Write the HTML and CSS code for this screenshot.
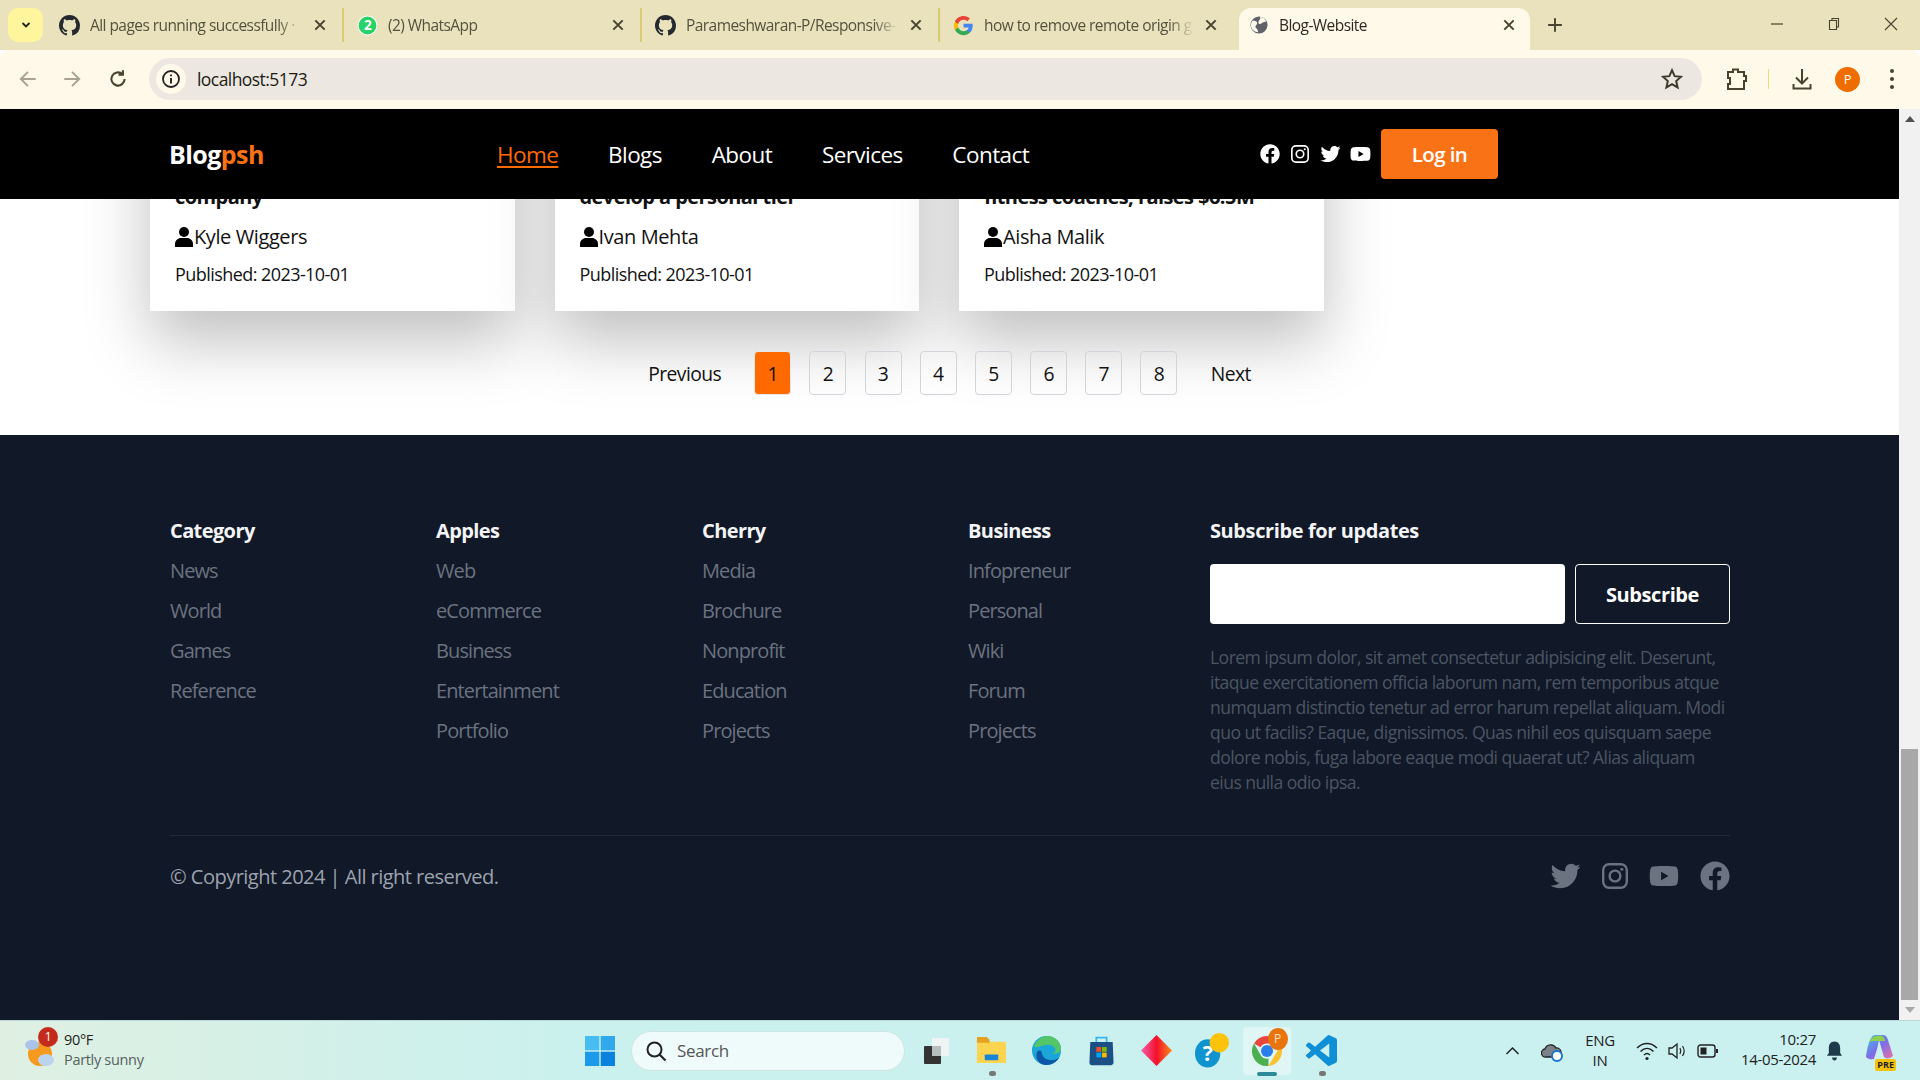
FILE: index.html
```html
<!DOCTYPE html>
<html lang="en">
<head>
<meta charset="utf-8">
<title>Blog-Website</title>
<link rel="stylesheet" href="styles.css">
</head>
<body>
<svg class="defs" aria-hidden="true">
  <defs>
    <symbol id="gh" viewBox="0 0 16 16"><path d="M8 0C3.58 0 0 3.58 0 8c0 3.54 2.29 6.53 5.47 7.59.4.07.55-.17.55-.38 0-.19-.01-.82-.01-1.49-2.01.37-2.53-.49-2.69-.94-.09-.23-.48-.94-.82-1.13-.28-.15-.68-.52-.01-.53.63-.01 1.08.58 1.23.82.72 1.21 1.87.87 2.33.66.07-.52.28-.87.51-1.07-1.78-.2-3.64-.89-3.64-3.95 0-.87.31-1.59.82-2.15-.08-.2-.36-1.02.08-2.12 0 0 .67-.21 2.2.82.64-.18 1.32-.27 2-.27.68 0 1.36.09 2 .27 1.53-1.04 2.2-.82 2.2-.82.44 1.1.16 1.92.08 2.12.51.56.82 1.27.82 2.15 0 3.07-1.87 3.75-3.65 3.95.29.25.54.73.54 1.48 0 1.07-.01 1.93-.01 2.2 0 .21.15.46.55.38A8.013 8.013 0 0016 8c0-4.42-3.58-8-8-8z"/></symbol>
    <symbol id="x" viewBox="0 0 12 12"><path d="M2 2l8 8M10 2l-8 8" fill="none" stroke="currentColor" stroke-width="1.7"/></symbol>
    <symbol id="fb" viewBox="0 0 512 512"><path d="M504 256C504 119 393 8 256 8S8 119 8 256c0 123.78 90.69 226.38 209.25 245V327.69h-63V256h63v-54.64c0-62.15 37-96.48 93.67-96.48 27.14 0 55.52 4.84 55.52 4.84v61h-31.28c-30.8 0-40.41 19.12-40.41 38.73V256h68.78l-11 71.69h-57.78V501C413.31 482.38 504 379.78 504 256z"/></symbol>
    <symbol id="tw" viewBox="0 0 512 512"><path d="M459.37 151.716c.325 4.548.325 9.097.325 13.645 0 138.72-105.583 298.558-298.558 298.558-59.452 0-114.68-17.219-161.137-47.106 8.447.974 16.568 1.299 25.34 1.299 49.055 0 94.213-16.568 130.274-44.832-46.132-.975-84.792-31.188-98.112-72.772 6.498.974 12.995 1.624 19.818 1.624 9.421 0 18.843-1.3 27.614-3.573-48.081-9.747-84.143-51.98-84.143-102.985v-1.299c13.969 7.797 30.214 12.67 47.431 13.319-28.264-18.843-46.781-51.005-46.781-87.391 0-19.492 5.197-37.36 14.294-52.954 51.655 63.675 129.3 105.258 216.365 109.807-1.624-7.797-2.599-15.918-2.599-24.04 0-57.828 46.782-104.934 104.934-104.934 30.213 0 57.502 12.67 76.67 33.137 23.715-4.548 46.456-13.32 66.599-25.34-7.798 24.366-24.366 44.833-46.132 57.827 21.117-2.273 41.584-8.122 60.426-16.243-14.292 20.791-32.161 39.308-52.628 54.253z"/></symbol>
    <symbol id="yt" viewBox="0 0 576 512"><path d="M549.655 124.083c-6.281-23.65-24.787-42.276-48.284-48.597C458.781 64 288 64 288 64S117.22 64 74.629 75.486c-23.497 6.322-42.003 24.947-48.284 48.597-11.412 42.867-11.412 132.305-11.412 132.305s0 89.438 11.412 132.305c6.281 23.65 24.787 41.5 48.284 47.821C117.22 448 288 448 288 448s170.78 0 213.371-11.486c23.497-6.321 42.003-24.171 48.284-47.821 11.412-42.867 11.412-132.305 11.412-132.305s0-89.438-11.412-132.305zm-317.51 213.508V175.185l142.739 81.205-142.739 81.201z"/></symbol>
    <symbol id="ig" viewBox="0 0 24 24"><rect x="1.1" y="1.1" width="21.8" height="21.8" rx="5.5" fill="none" stroke="currentColor" stroke-width="2.2"/><circle cx="12" cy="12" r="5" fill="none" stroke="currentColor" stroke-width="2.2"/><circle cx="18.3" cy="5.7" r="1.4" fill="currentColor"/></symbol>
    <symbol id="user" viewBox="0 0 18 20"><circle cx="9" cy="5" r="5"/><path d="M0 20v-3c0-3.500 3-6 6-6h6c3 0 6 2.500 6 6v3z"/></symbol>
  </defs>
</svg>

<div class="tabstrip">
  <div class="tabs-btn"><svg class="i12" viewBox="0 0 12 12"><path d="M2.500 4l3.500 3.500L9.500 4" fill="none" stroke="#222" stroke-width="1.800"/></svg></div>
  <div class="tab">
    <svg class="fav"><use href="#gh"/></svg>
    <span class="tab-title">All pages running successfully ·</span>
    <svg class="tab-x"><use href="#x"/></svg>
  </div>
  <div class="tab">
    <svg class="fav" viewBox="0 0 20 20"><circle cx="10" cy="10" r="9" fill="#25d366" stroke="#fff"/><text x="10" y="14.500" text-anchor="middle" class="wa-num">2</text></svg>
    <span class="tab-title">(2) WhatsApp</span>
    <svg class="tab-x"><use href="#x"/></svg>
  </div>
  <div class="tab">
    <svg class="fav"><use href="#gh"/></svg>
    <span class="tab-title">Parameshwaran-P/Responsive-</span>
    <svg class="tab-x"><use href="#x"/></svg>
  </div>
  <div class="tab tab-last">
    <svg class="fav" viewBox="0 0 48 48"><path fill="#4285f4" d="M45 24.500c0-1.600-.1-3.100-.4-4.500H24v8.500h11.800c-.5 2.700-2 5-4.300 6.600v5.500h7C42.600 36.800 45 31.200 45 24.500z"/><path fill="#34a853" d="M24 46c5.900 0 10.900-2 14.500-5.400l-7-5.500c-2 1.300-4.500 2.100-7.500 2.100-5.700 0-10.600-3.900-12.300-9H4.400v5.600C8 40.900 15.400 46 24 46z"/><path fill="#fbbc05" d="M11.700 28.700c-.9-2.700-.9-5.700 0-8.400v-5.700H4.400c-3 6-3 13.800 0 19.800z"/><path fill="#ea4335" d="M24 10.900c3.200 0 6.100 1.100 8.400 3.300l6.300-6.300C34.900 4.300 29.900 2 24 2 15.400 2 8 7.100 4.400 14.600l7.300 5.700c1.700-5.500 6.600-9.400 12.300-9.400z"/></svg>
    <span class="tab-title">how to remove remote origin g</span>
    <svg class="tab-x"><use href="#x"/></svg>
  </div>
  <div class="tab-active">
    <svg class="fav fav-active" viewBox="0 0 20 20"><circle cx="10" cy="10" r="9.500" fill="#5f6368"/><path d="M3 5c3 0 5 1 5 3s-2 2-2 4 3 2 3 6c-4 0-8-3-8-8 0-2 1-4 2-5zM11 1c3 0 6 2 7 5l-3 1c-2 0-2 2-4 2s-2-2-1-4 2-1 1-4z" fill="#fff9ea"/></svg>
    <span class="tab-title tab-title-active">Blog-Website</span>
    <svg class="tab-x"><use href="#x"/></svg>
  </div>
  <svg class="newtab" viewBox="0 0 14 14"><path d="M7 1v12M1 7h12" fill="none" stroke="#47432f" stroke-width="1.700"/></svg>
  <div class="winctl">
    <svg class="i14" viewBox="0 0 14 14"><path d="M1 7h12" stroke="#47432f" stroke-width="1.200"/></svg>
    <svg class="i14" viewBox="0 0 14 14"><path d="M2.500 3.500h7v9h-7zM5 3.500V1.500h6.500v8.500h-2" fill="none" stroke="#47432f" stroke-width="1.100"/></svg>
    <svg class="i14" viewBox="0 0 14 14"><path d="M1 1l12 12M13 1L1 13" stroke="#47432f" stroke-width="1.100"/></svg>
  </div>
</div>

<div class="toolbar">
  <svg class="tool-ic dim" viewBox="0 0 20 20"><path d="M17 10H4M10 3.500L3.500 10l6.500 6.500" fill="none" stroke="currentColor" stroke-width="1.800"/></svg>
  <svg class="tool-ic dim" viewBox="0 0 20 20"><path d="M3 10h13M10 3.500l6.500 6.500-6.500 6.500" fill="none" stroke="currentColor" stroke-width="1.800"/></svg>
  <svg class="tool-ic tool-reload" viewBox="0 0 20 20"><path d="M16 10a6 6 0 1 1-2-4.500M14.500 2v4h-4" fill="none" stroke="currentColor" stroke-width="1.900"/></svg>
  <div class="omnibox">
    <div class="info"><svg class="i20" viewBox="0 0 20 20"><circle cx="10" cy="10" r="8" fill="none" stroke="#222" stroke-width="1.800"/><path d="M10 9v5.500M10 5.500v1.800" stroke="#222" stroke-width="1.900"/></svg></div>
    <span class="url">localhost:5173</span>
    <svg class="star" viewBox="0 0 20 20"><path d="M10 2l2.400 5.400 5.800.6-4.400 3.900 1.300 5.800-5.100-3-5.100 3 1.300-5.800L1.800 8l5.800-.6z" fill="none" stroke="#3d3a2b" stroke-width="1.800"/></svg>
  </div>
  <svg class="ext" viewBox="0 0 22 24"><path d="M3 5h5V2.500h5V5h6v4h2v5h-2v8H3v-5h2v-6H3z" fill="none" stroke="#47432f" stroke-width="2"/></svg>
  <div class="tool-sep"></div>
  <svg class="dl" viewBox="0 0 22 24"><path d="M11 2v14M5 10.500l6 6 6-6M2.500 17v4.500h17V17" fill="none" stroke="#47432f" stroke-width="2"/></svg>
  <div class="avatar">P</div>
  <svg class="dots" viewBox="0 0 6 22"><circle cx="3" cy="3" r="2" fill="#47432f"/><circle cx="3" cy="11" r="2" fill="#47432f"/><circle cx="3" cy="19" r="2" fill="#47432f"/></svg>
</div>

<div class="viewport">
  <div class="page">
    <header class="site-header">
      <a class="logo">Blog<span class="logo-accent">psh</span></a>
      <nav class="site-nav">
        <a class="nav-current">Home</a>
        <a>Blogs</a>
        <a>About</a>
        <a>Services</a>
        <a>Contact</a>
      </nav>
      <div class="head-right">
        <svg class="soc soc-fb"><use href="#fb"/></svg>
        <svg class="soc soc-ig"><use href="#ig"/></svg>
        <svg class="soc soc-tw"><use href="#tw"/></svg>
        <svg class="soc soc-yt"><use href="#yt"/></svg>
        <button class="login">Log in</button>
      </div>
    </header>

    <main class="blog-main">
      <div class="cards">
        <article class="card">
          <h3 class="card-title">company</h3>
          <div class="author"><svg class="user"><use href="#user"/></svg>Kyle Wiggers</div>
          <p class="pub">Published: 2023-10-01</p>
        </article>
        <article class="card">
          <h3 class="card-title">develop a personal tier</h3>
          <div class="author"><svg class="user"><use href="#user"/></svg>Ivan Mehta</div>
          <p class="pub">Published: 2023-10-01</p>
        </article>
        <article class="card">
          <h3 class="card-title">fitness coaches, raises $6.5M</h3>
          <div class="author"><svg class="user"><use href="#user"/></svg>Aisha Malik</div>
          <p class="pub">Published: 2023-10-01</p>
        </article>
      </div>
      <div class="pager">
        <a class="pager-text pager-prev">Previous</a>
        <a class="pg pg-on">1</a>
        <a class="pg">2</a>
        <a class="pg">3</a>
        <a class="pg">4</a>
        <a class="pg">5</a>
        <a class="pg">6</a>
        <a class="pg">7</a>
        <a class="pg">8</a>
        <a class="pager-text pager-next">Next</a>
      </div>
    </main>

    <footer class="site-footer">
      <div class="foot-grid">
        <div class="foot-col">
          <h4>Category</h4>
          <a>News</a><a>World</a><a>Games</a><a>Reference</a>
        </div>
        <div class="foot-col">
          <h4>Apples</h4>
          <a>Web</a><a>eCommerce</a><a>Business</a><a>Entertainment</a><a>Portfolio</a>
        </div>
        <div class="foot-col">
          <h4>Cherry</h4>
          <a>Media</a><a>Brochure</a><a>Nonprofit</a><a>Education</a><a>Projects</a>
        </div>
        <div class="foot-col">
          <h4>Business</h4>
          <a>Infopreneur</a><a>Personal</a><a>Wiki</a><a>Forum</a><a>Projects</a>
        </div>
        <div class="foot-sub">
          <h4>Subscribe for updates</h4>
          <form class="sub-form">
            <input class="sub-input" type="text" aria-label="Email">
            <button class="sub-btn" type="button">Subscribe</button>
          </form>
          <p class="sub-text">Lorem ipsum dolor, sit amet consectetur adipisicing elit. Deserunt,<br>itaque exercitationem officia laborum nam, rem temporibus atque<br>numquam distinctio tenetur ad error harum repellat aliquam. Modi<br>quo ut facilis? Eaque, dignissimos. Quas nihil eos quisquam saepe<br>dolore nobis, fuga labore eaque modi quaerat ut? Alias aliquam<br>eius nulla odio ipsa.</p>
        </div>
      </div>
      <div class="foot-bottom">
        <span class="copy">© Copyright 2024 | All right reserved.</span>
        <div class="foot-soc">
          <svg class="fs fs-tw"><use href="#tw"/></svg>
          <svg class="fs fs-ig"><use href="#ig"/></svg>
          <svg class="fs fs-yt"><use href="#yt"/></svg>
          <svg class="fs fs-fb"><use href="#fb"/></svg>
        </div>
      </div>
    </footer>
  </div>
  <div class="scrollbar">
    <div class="sb-arrow"><div class="tri-up"></div></div>
    <div class="sb-track"></div>
    <div class="sb-thumb"></div>
    <div class="sb-arrow"><div class="tri-down"></div></div>
  </div>
</div>

<div class="taskbar">
  <div class="weather">
    <div class="wx-icon">
      <svg class="wx-svg" viewBox="0 0 32 36"><circle cx="15" cy="20" r="12" fill="#f59a1f"/><ellipse cx="7" cy="11" rx="7" ry="5" fill="#a9c4e8"/><ellipse cx="21" cy="26" rx="8" ry="6" fill="#bcd3f0"/></svg>
      <span class="wx-badge">1</span>
    </div>
    <div class="wx-text"><span class="wx-temp">90°F</span><span class="wx-desc">Partly sunny</span></div>
  </div>
  <div class="app">
    <svg class="ic-win" viewBox="0 0 30 30"><rect x="0" y="0" width="14.300" height="14.300" fill="#47bdf2"/><rect x="15.700" y="0" width="14.300" height="14.300" fill="#2fa8ec"/><rect x="0" y="15.700" width="14.300" height="14.300" fill="#1a9ae8"/><rect x="15.700" y="15.700" width="14.300" height="14.300" fill="#0a82de"/></svg>
  </div>
  <div class="search">
    <svg class="i22" viewBox="0 0 22 22"><circle cx="9.500" cy="9.500" r="7" fill="none" stroke="#222" stroke-width="2"/><path d="M14.500 14.500l6 6" stroke="#222" stroke-width="2.200"/></svg>
    <span class="search-label">Search</span>
  </div>
  <div class="app">
    <svg class="ic-task" viewBox="0 0 26 26"><rect x="0" y="8" width="17" height="18" rx="1" fill="#333"/><rect x="8" y="0" width="17" height="18" rx="1" fill="#eef4f4"/><rect x="8" y="8" width="9" height="10" fill="#b8bdbd"/></svg>
  </div>
  <div class="app">
    <svg class="ic-app" viewBox="0 0 32 30"><path d="M1 3h10l3 3h17v22H1z" fill="#fcd44f"/><path d="M1 1h10l3 3v3H1z" fill="#e3a21f"/><rect x="9" y="19" width="14" height="6" rx="1" fill="#1a85d6"/></svg>
    <span class="app-dot"></span>
  </div>
  <div class="app">
    <svg class="ic-app" viewBox="0 0 32 32"><circle cx="16" cy="16" r="15" fill="#1aa6d8"/><path d="M3 12C6 4 12 1 17 1c8 0 14 6 14 13 0 4-4 6-9 5 3-1 4-3 3-5-2-4-8-5-13-3-4 1-7 2-9 1z" fill="#53c66a"/><path d="M11 17c0 6 5 9 11 9 2 0 5-1 7-3-2 5-8 8-13 8-7 0-12-6-10-13 1-2 3-3 5-1z" fill="#0c58a8"/></svg>
  </div>
  <div class="app">
    <svg class="ic-app" viewBox="0 0 30 36"><path d="M9 8V3h12v5" fill="none" stroke="#38b6ea" stroke-width="2"/><path d="M2 8h26l1 24c0 2-2 3-3 3H4c-2 0-3-1-3-3z" fill="#1b4f86"/><rect x="9" y="14" width="5.500" height="5.500" fill="#f25022"/><rect x="15.500" y="14" width="5.500" height="5.500" fill="#7fba00"/><rect x="9" y="20.500" width="5.500" height="5.500" fill="#00a4ef"/><rect x="15.500" y="20.500" width="5.500" height="5.500" fill="#ffb900"/></svg>
  </div>
  <div class="app">
    <svg class="ic-app" viewBox="0 0 30 30"><defs><linearGradient id="dia" x1="0" x2="1" y1="0" y2="0"><stop offset="0" stop-color="#f45fb0"/><stop offset=".5" stop-color="#f5102c"/><stop offset="1" stop-color="#fb8a1a"/></linearGradient></defs><path d="M15 0l15 15-15 15L0 15z" fill="url(#dia)"/></svg>
  </div>
  <div class="app">
    <svg class="ic-help" viewBox="0 0 36 36"><ellipse cx="14" cy="21" rx="13" ry="14.500" fill="#0f94cf"/><text x="14" y="29" text-anchor="middle" class="help-q">?</text><ellipse cx="26" cy="10" rx="10" ry="10" fill="#fcc30a"/></svg>
  </div>
  <div class="app app-on">
    <svg class="ic-chrome" viewBox="0 0 48 48"><path d="M24 4a20 20 0 0 1 17.300 10H24a10 10 0 0 0-8.700 5L6.700 14A20 20 0 0 1 24 4z" fill="#e8453c"/><path d="M41.300 14A20 20 0 0 1 26 44l8.700-15a10 10 0 0 0 0-15z" fill="#fbc02d"/><path d="M6.700 14l8.600 15a10 10 0 0 0 10.700 5L26 44A20 20 0 0 1 6.700 14z" fill="#4caf50"/><circle cx="24" cy="24" r="8" fill="#2b7de9"/></svg>
    <span class="chrome-badge">P</span>
    <span class="app-bar"></span>
  </div>
  <div class="app">
    <svg class="ic-app" viewBox="0 0 24 24"><path fill="#0f8fd6" d="M23.150 2.587L18.210.21a1.494 1.494 0 0 0-1.705.29l-9.460 8.630-4.120-3.128a.999.999 0 0 0-1.276.057L.327 7.261A1 1 0 0 0 .326 8.740L3.899 12 .326 15.260a1 1 0 0 0 .001 1.479L1.650 17.940a.999.999 0 0 0 1.276.057l4.120-3.128 9.460 8.630a1.492 1.492 0 0 0 1.704.29l4.942-2.377A1.500 1.500 0 0 0 24 20.060V3.939a1.500 1.500 0 0 0-.85-1.352zm-5.146 14.861L10.826 12l7.178-5.448v10.896z"/></svg>
    <span class="app-dot"></span>
  </div>
  <div class="tray">
    <svg class="tr-caret" viewBox="0 0 14 10"><path d="M1 8l6-6 6 6" fill="none" stroke="#222" stroke-width="1.500"/></svg>
    <svg class="tr-cloud" viewBox="0 0 22 22"><path d="M5 17a4 4 0 0 1-1-8 6 6 0 0 1 11-1 4.500 4.500 0 0 1 1 9z" fill="#7c8288" stroke="#222" stroke-width="1.300"/><circle cx="16" cy="16" r="5" fill="#fff" stroke="#1976d2" stroke-width="2"/></svg>
    <div class="tr-lang"><span>ENG</span><span>IN</span></div>
    <svg class="tr-wifi" viewBox="0 0 22 20"><path d="M1 7c6-6 14-6 20 0M4.500 10.500c4-4 9-4 13 0M8 14c2-2 4-2 6 0" fill="none" stroke="#222" stroke-width="1.500"/><circle cx="11" cy="17.500" r="1.600" fill="#222"/></svg>
    <svg class="tr-sound" viewBox="0 0 20 20"><path d="M2 7h3l5-4v14l-5-4H2z" fill="none" stroke="#222" stroke-width="1.300"/><path d="M13 7c1 2 1 4 0 6M15.500 5c2 3 2 7 0 10" fill="none" stroke="#222" stroke-width="1.200"/></svg>
    <svg class="tr-batt" viewBox="0 0 22 14"><rect x="1" y="1" width="17" height="12" rx="2.500" fill="none" stroke="#222" stroke-width="1.400"/><rect x="3.500" y="3.500" width="6" height="7" fill="#222"/><rect x="19" y="5" width="2" height="4" fill="#222"/></svg>
    <div class="tr-clock"><span>10:27</span><span>14-05-2024</span></div>
    <svg class="tr-bell" viewBox="0 0 18 22"><path d="M9 1c4 0 6 3 6 7v5l2 3H1l2-3V8c0-4 2-7 6-7z" fill="#1f3a4a"/><path d="M6.500 18h5c0 2-1 3-2.500 3s-2.500-1-2.500-3z" fill="#1f3a4a"/></svg>
    <div class="tr-copilot">
      <svg class="ic-copilot" viewBox="0 0 30 30"><defs><linearGradient id="cop" x1="0" x2="1" y1="0" y2="1"><stop offset="0" stop-color="#36c5e8"/><stop offset=".5" stop-color="#7d6ee8"/><stop offset="1" stop-color="#f06fa0"/></linearGradient></defs><path d="M11 1h8c3 0 4 2 5 5l5 16c-3 3-7 3-9 1l-5-17c-1 6-3 13-5 19-3 1-6 0-8-2C3 15 6 1 11 1z" fill="url(#cop)"/><path d="M5 8c3-6 8-7 13-6 2 1 3 3 3 5H11c-3 0-5 0-6 1z" fill="#8fd14f"/></svg>
      <span class="pre">PRE</span>
    </div>
  </div>
</div>
</body>
</html>
```
FILE: styles.css
```css
* { box-sizing: border-box; }
html, body { margin: 0; padding: 0; height: 100%; overflow: hidden; }
body {
  width: 1920px;
  height: 1080px;
  display: flex;
  flex-direction: column;
  font-family: "Open Sans", "Noto Sans", sans-serif;
  letter-spacing: -0.035em;
  background: #fff;
  color: #111;
}
a { color: inherit; text-decoration: none; }
.defs { width: 0; height: 0; position: absolute; }
.i12 { width: 12px; height: 12px; }
.i14 { width: 14px; height: 14px; }
.i20 { width: 20px; height: 20px; }
.i22 { width: 22px; height: 22px; }

/* browser tab strip */
.tabstrip {
  height: 50px;
  flex: none;
  display: flex;
  background: #e9e2bc;
  padding-top: 8px;
  padding-left: 8px;
  position: relative;
}
.tabs-btn {
  width: 35px;
  height: 34px;
  background: #fff59d;
  border-radius: 10px;
  display: flex;
  align-items: center;
  justify-content: center;
  margin-right: 3px;
}
.tab {
  width: 298px;
  height: 34px;
  flex: none;
  display: flex;
  align-items: center;
  padding-left: 13px;
  padding-right: 15px;
  border-right: 2px solid #d9cb73;
  color: #3d3a2b;
}
.tab-last { border-right: 0; padding-right: 21px; width: 299px; }
.fav { width: 21px; height: 21px; flex: none; fill: #24292f; }
.fav-active { width: 18px; height: 18px; }
.wa-num { font: 700 13px "Open Sans", sans-serif; fill: #fff; }
.tab-title {
  flex: 1;
  min-width: 0;
  margin-left: 10px;
  font-size: 15.500px;
  color: #55523f;
  white-space: nowrap;
  overflow: hidden;
  -webkit-mask-image: linear-gradient(90deg, #000 88%, transparent 100%);
  mask-image: linear-gradient(90deg, #000 88%, transparent 100%);
}
.tab-title-active { color: #2c2a20; margin-left: 11px; }
.tab-x { width: 14px; height: 14px; flex: none; color: #47432f; margin-left: 10px; }
.tab-active {
  width: 291px;
  height: 42px;
  flex: none;
  display: flex;
  align-items: center;
  align-self: flex-start;
  padding: 0 14px 8px 11px;
  background: #fff9ea;
  border-radius: 12px 12px 0 0;
  color: #222;
}
.newtab { width: 16px; height: 16px; margin: 9px 0 0 17px; flex: none; }
.winctl {
  margin-left: auto;
  display: flex;
  gap: 43px;
  padding: 9px 22px 0 0;
  align-self: flex-start;
}

/* browser toolbar */
.toolbar {
  height: 59px;
  flex: none;
  display: flex;
  align-items: center;
  background: #fff9ea;
  border-radius: 10px 10px 0 0;
  padding-left: 17px;
  padding-bottom: 1px;
}
.tool-ic { width: 22px; height: 22px; margin-right: 22px; color: #47432f; flex: none; }
.tool-ic.dim { color: #a6a395; }
.tool-reload { margin-left: 2px; margin-right: 21px; }
.omnibox {
  width: 1553px;
  height: 42px;
  flex: none;
  margin-left: -1px;
  background: #ece8e1;
  border-radius: 21px;
  display: flex;
  align-items: center;
  padding-left: 7px;
}
.info {
  width: 30px;
  height: 30px;
  border-radius: 50%;
  background: #fff9ea;
  display: flex;
  align-items: center;
  justify-content: center;
}
.url { font-size: 17.500px; margin-left: 11px; color: #1c1b15; }
.star { width: 22px; height: 22px; margin-left: auto; margin-right: 19px; }
.ext { width: 22px; height: 24px; margin-left: 23px; flex: none; }
.tool-sep { width: 1px; height: 20px; background: #e8dc7a; margin-left: 21px; flex: none; }
.dl { width: 22px; height: 24px; margin-left: 22px; flex: none; }
.avatar {
  width: 25px;
  height: 25px;
  margin-left: 22px;
  border-radius: 50%;
  background: #ef6c00;
  color: #ffe;
  font-size: 13px;
  display: flex;
  align-items: center;
  justify-content: center;
  flex: none;
}
.dots { width: 6px; height: 22px; margin-left: 29px; flex: none; }

/* viewport */
.viewport { flex: 1; min-height: 0; display: flex; }
.page { width: 1899px; flex: none; display: flex; flex-direction: column; }

.site-header {
  height: 90px;
  flex: none;
  background: #000;
  color: #fff;
  display: flex;
  align-items: center;
  padding: 0 401px 0 170px;
  position: relative;
  z-index: 2;
}
.logo { width: 327px; font-size: 25px; font-weight: 700; flex: none; margin-left: -1px; margin-right: 1px; }
.logo-accent { color: #f97316; }
.site-nav { display: flex; gap: 49.700px; font-size: 22.500px; }
.nav-current { color: #ff6a00; text-decoration: underline; text-underline-offset: 3px; }
.head-right { margin-left: auto; display: flex; align-items: center; }
.soc { height: 20px; fill: #fff; color: #fff; flex: none; }
.soc-fb { width: 20px; margin-right: 11px; }
.soc-ig { width: 18px; margin-right: 11px; }
.soc-tw { width: 21px; margin-right: 9px; }
.soc-yt { width: 21px; margin-right: 10px; }
.login {
  width: 117px;
  height: 50px;
  border: 0;
  border-radius: 4px;
  background: #f97316;
  color: #fff;
  font: 600 20.500px "Open Sans", sans-serif;
  letter-spacing: -0.03em;
}

.blog-main { height: 236px; flex: none; overflow: hidden; padding: 0 0 0 150px; }
.cards { display: flex; gap: 40px; margin-top: -100px; }
.card {
  width: 364.500px;
  height: 212px;
  background: #fff;
  box-shadow: 0 30px 60px rgba(0,0,0,.25);
  padding: 0 25px 24px;
  display: flex;
  flex-direction: column;
  justify-content: flex-end;
}
.card-title { margin: 0 0 12px; font-size: 20px; line-height: 28px; font-weight: 700; }
.author { display: flex; align-items: center; font-size: 20px; line-height: 28px; margin-bottom: 10px; letter-spacing: -0.02em; }
.user { width: 18px; height: 20px; margin-right: 1px; fill: #000; flex: none; }
.pub { margin: 0; font-size: 18px; line-height: 26px; }

.pager {
  width: 1749px;
  margin-top: 40px;
  position: relative;
  display: flex;
  justify-content: center;
  align-items: center;
  padding-right: 150px;
  font-size: 19.300px;
}
.pg {
  width: 37px;
  height: 44px;
  margin-right: 18.200px;
  border: 1px solid #d1d5db;
  border-radius: 4px;
  display: flex;
  align-items: center;
  justify-content: center;
}
.pg-on { background: #ff6a00; border-color: #e5e7eb; }
.pager-prev { margin-right: 33px; }
.pager-next { margin-left: 15px; }

.site-footer {
  flex: 1;
  background: #111827;
  padding: 82px 169px 0 170px;
}
.foot-grid {
  display: grid;
  grid-template-columns: 266px 266px 266px 242px 1fr;
  height: 319px;
  border-bottom: 1px solid #1f2937;
}
.foot-col h4, .foot-sub h4 {
  margin: 0 0 12px;
  font-size: 20px;
  line-height: 28px;
  font-weight: 700;
  color: #f3f4f6;
  letter-spacing: -0.03em;
}
.foot-col { display: flex; flex-direction: column; }
.foot-col a { font-size: 20px; line-height: 28px; margin-bottom: 12px; color: #6b7280; letter-spacing: -0.045em; }
.sub-form { display: flex; gap: 10px; margin-top: 19px; }
.foot-sub h4 { margin-bottom: 0; letter-spacing: -0.02em; }
.sub-input {
  width: 355px;
  height: 60px;
  border: 0;
  border-radius: 4px;
  background: #fff;
}
.sub-btn {
  width: 155px;
  height: 60px;
  border: 1px solid #fff;
  border-radius: 4px;
  background: transparent;
  color: #fff;
  font: 700 20px "Open Sans", sans-serif;
  letter-spacing: -0.02em;
}
.sub-text { margin: 21px 0 0; font-size: 17.600px; line-height: 25px; color: #4b5563; white-space: nowrap; }
.foot-bottom {
  display: flex;
  justify-content: space-between;
  align-items: center;
  height: 80px;
}
.copy { font-size: 20.100px; color: #9ca3af; }
.foot-soc { display: flex; align-items: center; gap: 21px; }
.fs { height: 30px; fill: #6b7280; color: #6b7280; flex: none; }
.fs-tw { width: 31px; }
.fs-ig { width: 26px; }
.fs-yt { width: 30px; }
.fs-fb { width: 30px; }

/* scrollbar */
.scrollbar { width: 21px; flex: none; display: flex; flex-direction: column; align-items: center; background: #f1f1f1; }
.sb-arrow { width: 100%; height: 20px; flex: none; display: flex; align-items: center; justify-content: center; }
.sb-track { flex: 1; }
.sb-thumb { width: 17px; height: 251px; flex: none; background: #a8a8a8; }
.tri-up { border: 5px solid transparent; border-top: 0; border-bottom: 6px solid #505050; }
.tri-down { border: 5px solid transparent; border-bottom: 0; border-top: 6px solid #a8a8a8; }

/* taskbar */
.taskbar {
  height: 60px;
  flex: none;
  display: flex;
  align-items: center;
  background: linear-gradient(90deg, #dff0e2 0, #caf1ee 30%, #caf0f0 100%);
  border-top: 1px solid #b9d8d8;
  letter-spacing: -0.02em;
}
.weather { width: 572px; flex: none; display: flex; align-items: center; padding-left: 25px; }
.wx-icon { position: relative; width: 32px; height: 36px; margin-top: 2px; }
.wx-svg { width: 32px; height: 36px; display: block; }
.wx-badge {
  position: absolute;
  top: -7px;
  left: 13px;
  width: 20px;
  height: 20px;
  border-radius: 50%;
  background: #c42b1c;
  color: #fff;
  font-size: 12px;
  display: flex;
  align-items: center;
  justify-content: center;
}
.wx-text { display: flex; flex-direction: column; margin-left: 7px; margin-top: -2px; font-size: 14.500px; line-height: 20px; }
.wx-temp { color: #222; }
.wx-desc { color: #56605f; }
.app {
  width: 55px;
  height: 48px;
  flex: none;
  display: flex;
  align-items: center;
  justify-content: center;
  position: relative;
}
.ic-win { width: 30px; height: 30px; }
.ic-task { width: 26px; height: 26px; }
.ic-app { width: 31px; height: 31px; }
.ic-help { width: 35px; height: 35px; }
.ic-chrome { width: 36px; height: 36px; }
.help-q { font: 700 22px "Open Sans", sans-serif; fill: #fff; }
.app-on { background: #dff6f5; border-radius: 4px; width: 48px; margin: 0 3.500px; }
.app-dot {
  position: absolute;
  bottom: -1px;
  left: 50%;
  margin-left: -3px;
  width: 7px;
  height: 5px;
  border-radius: 3px;
  background: #777;
}
.app-bar {
  position: absolute;
  bottom: -1px;
  left: 50%;
  margin-left: -10px;
  width: 20px;
  height: 4px;
  border-radius: 2px;
  background: #2c8a99;
}
.chrome-badge {
  position: absolute;
  top: 1px;
  right: 3px;
  width: 20px;
  height: 22px;
  border-radius: 50%;
  background: #e9730c;
  color: #ffe2c0;
  font-size: 12px;
  display: flex;
  align-items: center;
  justify-content: center;
}
.search {
  width: 274px;
  height: 40px;
  margin-left: 4px;
  margin-right: 4px;
  flex: none;
  border-radius: 20px;
  background: #effbfa;
  border: 1px solid #cfe5e5;
  display: flex;
  align-items: center;
  padding-left: 13px;
}
.search-label { margin-left: 10px; font-size: 17px; color: #555; }
.tray { flex: 1; display: flex; align-items: center; padding-left: 156px; }
.tr-caret { width: 15px; height: 10px; flex: none; }
.tr-cloud { width: 22px; height: 22px; margin-left: 21px; flex: none; }
.tr-lang {
  width: 44px;
  margin-left: 15px;
  margin-top: -2px;
  display: flex;
  flex-direction: column;
  align-items: center;
  font-size: 15px;
  line-height: 20px;
  color: #222;
  flex: none;
}
.tr-wifi { width: 22px; height: 20px; margin-left: 14px; flex: none; }
.tr-sound { width: 20px; height: 20px; margin-left: 9px; flex: none; }
.tr-batt { width: 22px; height: 14px; margin-left: 10px; flex: none; }
.tr-clock {
  width: 94px;
  margin-left: 3px;
  margin-top: -4px;
  display: flex;
  flex-direction: column;
  align-items: flex-end;
  font-size: 15px;
  line-height: 20px;
  color: #222;
  flex: none;
}
.tr-bell { width: 17px; height: 22px; margin-left: 10px; flex: none; }
.tr-copilot { position: relative; width: 30px; height: 34px; margin-left: 21px; flex: none; }
.ic-copilot { width: 30px; height: 30px; display: block; }
.pre {
  position: absolute;
  right: -2px;
  bottom: -3px;
  padding: 0 2px;
  background: #f7c20c;
  border-radius: 2px;
  font-size: 9px;
  line-height: 12px;
  font-weight: 700;
  color: #222;
  letter-spacing: 0;
}
```
